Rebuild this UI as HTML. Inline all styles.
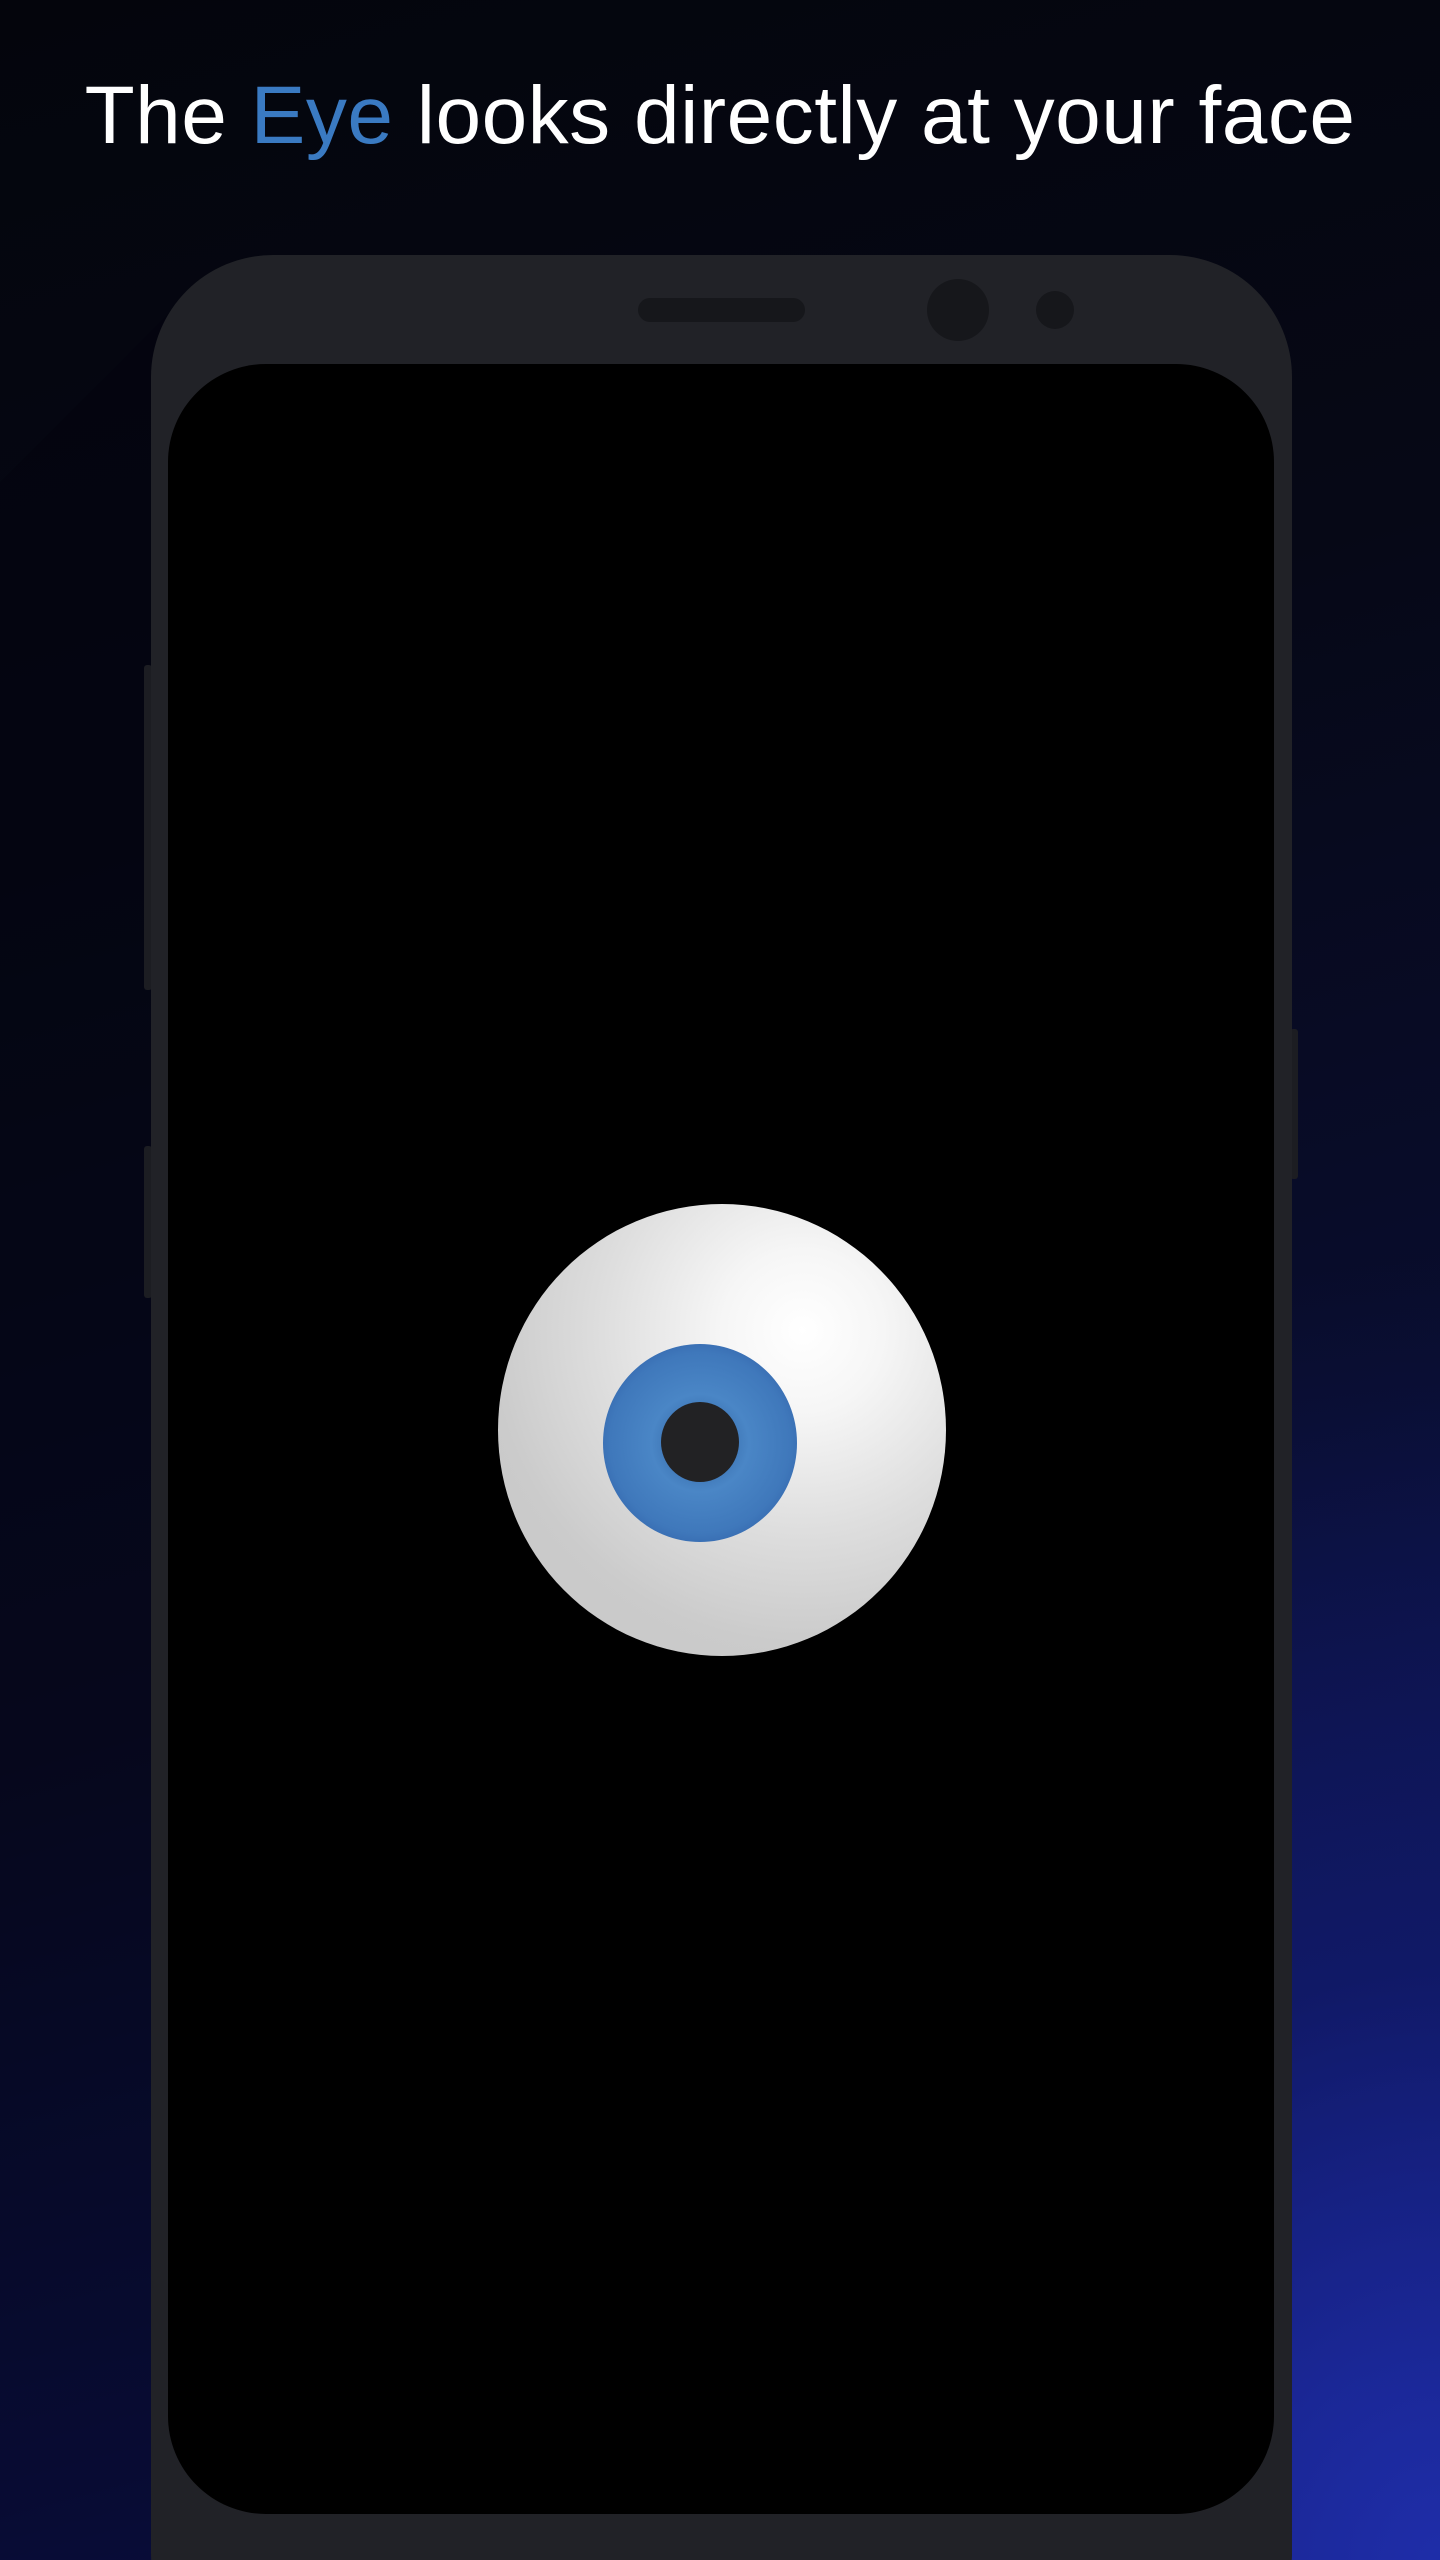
<!DOCTYPE html>
<html><head><meta charset="utf-8"><style>
html,body{margin:0;padding:0;width:1440px;height:2560px;overflow:hidden;background:#04050c;}
#wrap{position:relative;width:1440px;height:2560px;overflow:hidden;
background:radial-gradient(ellipse 1100px 1300px at 1440px 2560px,rgba(31,46,170,0.95) 0%,rgba(20,30,120,0.5) 45%,rgba(10,15,60,0) 100%),
linear-gradient(165deg,#04050c 0%,#060816 30%,#090d2e 60%,#0e1660 85%,#16208a 100%);
font-family:"Liberation Sans",sans-serif;}
.shade{position:absolute;left:0;top:0;width:1440px;height:2560px;
background:#04030e;clip-path:polygon(0 482px,170px 312px,170px 2560px,0 2560px);opacity:0.55}
.title{position:absolute;left:0;width:1440px;top:68px;text-align:center;color:#fff;font-size:82px;font-weight:300;letter-spacing:0.5px;line-height:96px}
.title span{color:#3a7ac2}
.phone{position:absolute;left:151px;top:255px;width:1141px;height:2420px;background:#212227;border-radius:122px}
.screen{position:absolute;left:168px;top:364px;width:1106px;height:2150px;background:#000;border-radius:98px}
.btn{position:absolute;background:#1c1d22}
</style></head><body><div id="wrap">
<div class="shade"></div>
<div class="title">The <span>Eye</span> looks directly at your face</div>
<div class="btn" style="left:144px;top:665px;width:8px;height:325px;border-radius:3px"></div>
<div class="btn" style="left:144px;top:1146px;width:8px;height:152px;border-radius:3px"></div>
<div class="btn" style="left:1290px;top:1029px;width:8px;height:150px;border-radius:3px"></div>
<div class="phone"></div>
<div style="position:absolute;left:638px;top:298px;width:167px;height:24px;border-radius:12px;background:#16171b"></div>
<div style="position:absolute;left:927px;top:279px;width:62px;height:62px;border-radius:50%;background:#16171b"></div>
<div style="position:absolute;left:1036px;top:291px;width:38px;height:38px;border-radius:50%;background:#16171b"></div>
<div class="screen"></div>
<div style="position:absolute;left:498px;top:1204px;width:448px;height:452px;border-radius:50%;
background:radial-gradient(circle at 68% 28%,#ffffff 0%,#f6f6f6 18%,#dedede 45%,#cbcbcb 70%,#c6c6c6 100%)"></div>
<div style="position:absolute;left:603px;top:1344px;width:194px;height:198px;border-radius:50%;
background:radial-gradient(circle at 50% 50%,#2a5b9a 0%,#4a86c6 35%,#3f78bb 65%,#2a56a0 92%,#22488a 100%)"></div>
<div style="position:absolute;left:661px;top:1402px;width:78px;height:80px;border-radius:50%;background:#222224"></div>
</div></body></html>
